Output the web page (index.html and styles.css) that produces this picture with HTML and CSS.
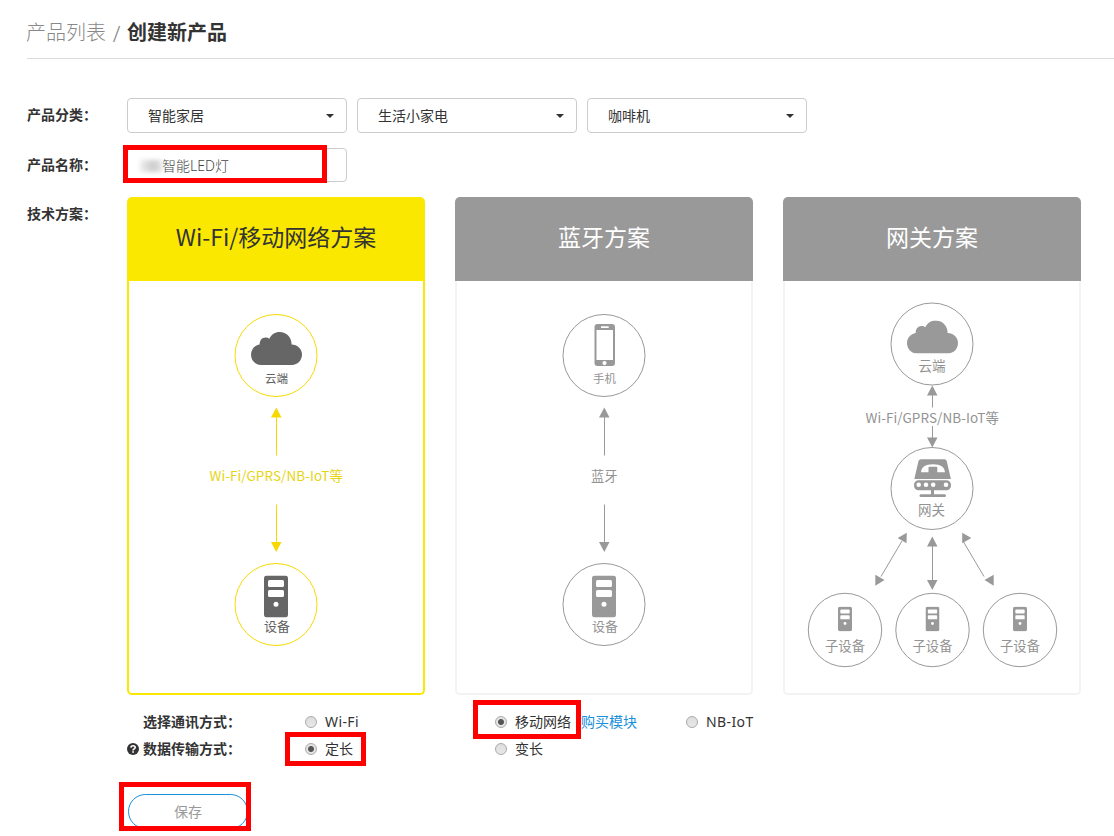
FILE: index.html
```html
<!DOCTYPE html>
<html lang="zh-CN">
<head>
<meta charset="utf-8">
<title>创建新产品</title>
<link rel="stylesheet" href="styles.css">
</head>
<body>
<svg class="symbols" width="0" height="0" aria-hidden="true">
  <symbol id="cloud" viewBox="0 0 51 33">
    <path d="M10 33C4.500 33 0 28.500 0 22.800C0 17.500 3.700 13.300 8.700 12.600C8.500 8.500 11 5.500 14.500 5.500C16 5.500 17.300 6 18.300 6.800C20.300 2.500 24 0 28.700 0C35.500 0 40.800 5.500 40.600 12.600C46.500 12.800 51 17 51 22.600C51 28.500 46.500 33 41 33Z"/>
  </symbol>
  <symbol id="server" viewBox="0 0 24 42">
    <path fill-rule="evenodd" d="M3 0H21Q24 0 24 3V39Q24 42 21 42H3Q0 42 0 39V3Q0 0 3 0ZM5.500 4.500Q4 4.500 4 6V10Q4 11.500 5.500 11.500H18.500Q20 11.500 20 10V6Q20 4.500 18.500 4.500ZM5.500 14.500Q4 14.500 4 16V20Q4 21.500 5.500 21.500H18.500Q20 21.500 20 20V16Q20 14.500 18.500 14.500ZM12 26.300A2.500 2.500 0 1 0 12 31.300A2.500 2.500 0 1 0 12 26.300Z"/>
  </symbol>
</svg>
<main class="page">
  <h1 class="crumbs"><a>产品列表</a><span class="slash">/</span><b>创建新产品</b></h1>

  <div class="row">
    <label class="label">产品分类：</label>
    <div class="selects">
      <div class="select">智能家居<i class="caret"></i></div>
      <div class="select">生活小家电<i class="caret"></i></div>
      <div class="select">咖啡机<i class="caret"></i></div>
    </div>
  </div>

  <div class="row">
    <label class="label">产品名称：</label>
    <div class="input"><i class="smudge"></i>智能LED灯<i class="mark mark-name"></i></div>
  </div>

  <div class="row row-plans">
    <label class="label">技术方案：</label>
    <div class="plans">
      <section class="plan active">
        <h2>Wi-Fi/移动网络方案</h2>
        <svg class="diagram" viewBox="0 0 294 412">
          <g class="line"><circle cx="147" cy="74.500" r="41"/><circle cx="147" cy="323.500" r="41"/><path d="M147.500 134V174.500M147.500 223.500V263"/></g>
          <path class="head" d="M147.300 126.500L152.500 136.500H142ZM147.300 271L152.500 261H142Z"/>
          <g class="icon"><use href="#cloud" x="122" y="51" width="51" height="33"/><use href="#server" x="135" y="294.500" width="24" height="42"/></g>
          <text class="t" x="136" y="101.500" textLength="23" font-size="11.500">云端</text>
          <text class="t link" x="80.500" y="199.500" textLength="133.500" font-size="13.500">Wi-Fi/GPRS/NB-IoT等</text>
          <text class="t" x="135" y="350" textLength="26" font-size="13">设备</text>
        </svg>
      </section>
      <section class="plan">
        <h2>蓝牙方案</h2>
        <svg class="diagram" viewBox="0 0 294 412">
          <g class="line"><circle cx="147" cy="74.500" r="41"/><circle cx="147" cy="323.500" r="41"/><path d="M147.500 134V174.500M147.500 223.500V263"/></g>
          <path class="head" d="M147.300 126.500L152.500 136.500H142ZM147.300 271L152.500 261H142Z"/>
          <g class="icon"><path fill-rule="evenodd" d="M140.500 43H155Q158 43 158 46V82Q158 85 155 85H140.500Q137.500 85 137.500 82V46Q137.500 43 140.500 43ZM139.500 49V79H156V49ZM144 45.300V47H151.700V45.300ZM147.500 80A2.100 2.100 0 1 0 147.500 84.200A2.100 2.100 0 1 0 147.500 80Z"/><use href="#server" x="135" y="294.500" width="24" height="42"/></g>
          <text class="t" x="136" y="101.500" textLength="23" font-size="11.500">手机</text>
          <text class="t" x="134" y="199.500" textLength="26.500" font-size="13.300">蓝牙</text>
          <text class="t" x="135" y="350" textLength="26" font-size="13">设备</text>
        </svg>
      </section>
      <section class="plan">
        <h2>网关方案</h2>
        <svg class="diagram" viewBox="0 0 294 412">
          <g class="line"><circle cx="147" cy="63" r="41"/><circle cx="147" cy="207.500" r="41"/><circle cx="60" cy="349" r="36.700"/><circle cx="147.500" cy="349" r="36.700"/><circle cx="235" cy="349" r="36.700"/><path d="M147.500 112V126.500M147.500 145V158M147.500 263V302M117 260L96 295.500M178 260L199 295.500"/></g>
          <path class="head" d="M147.300 104.500L152.500 114.500H142ZM147.300 166.500L152.500 156.500H142ZM147.300 255.500L152.500 265.500H142ZM147.300 309L152.500 299H142ZM121.800 251.700L112.700 257L121.500 262.300ZM90.300 293.700L99.500 299L90.300 304.700ZM177.200 251.700L186.300 257L177.200 262.300ZM208.700 293.700L199.500 299L208.700 304.700Z"/>
          <g class="icon"><use href="#cloud" x="122" y="39.500" width="51" height="33"/>
            <path fill-rule="evenodd" d="M136 178.300H159.500Q161.300 178.300 161.700 180L165.900 198H129.300L133.500 180Q134 178.300 136 178.300ZM136 191.300H143.500V186.500Q143.500 185.700 144.300 185.700H151.500Q152.300 185.700 152.300 186.500V191.300H160C159.500 186 156 183.200 148 183.200C140 183.200 136.500 186 136 191.300Z"/>
            <path fill-rule="evenodd" d="M133 199.200H162Q166 200 166 204.200Q166 208.400 162 209.200H133Q129 208.400 129 204.200Q129 200 133 199.200ZM133.700 201.500A2.300 2.300 0 1 0 133.700 206.100A2.300 2.300 0 1 0 133.700 201.500ZM141 201.500A2.300 2.300 0 1 0 141 206.100A2.300 2.300 0 1 0 141 201.500ZM148.200 201.500A2.300 2.300 0 1 0 148.200 206.100A2.300 2.300 0 1 0 148.200 201.500ZM161 201.500A2.300 2.300 0 1 0 161 206.100A2.300 2.300 0 1 0 161 201.500Z"/>
            <path d="M146 209H149V213.300H159.500Q161 213.300 161 214.700Q161 216 159.500 216H136Q134.500 216 134.500 214.700Q134.500 213.300 136 213.300H146Z"/>
            <use href="#server" x="53" y="325.500" width="14" height="25"/><use href="#server" x="140.500" y="325.500" width="14" height="25"/><use href="#server" x="228" y="325.500" width="14" height="25"/></g>
          <text class="t" x="133.500" y="90" textLength="27" font-size="13.500">云端</text>
          <text class="t" x="80.500" y="142" textLength="133.500" font-size="13.500">Wi-Fi/GPRS/NB-IoT等</text>
          <text class="t" x="133" y="234" textLength="27" font-size="13.500">网关</text>
          <text class="t" x="40" y="370" textLength="40" font-size="13.300">子设备</text>
          <text class="t" x="127.500" y="370" textLength="40" font-size="13.300">子设备</text>
          <text class="t" x="215" y="370" textLength="40" font-size="13.300">子设备</text>
        </svg>
      </section>
    </div>
  </div>

  <div class="options">
    <b class="option-label">选择通讯方式：</b>
    <span class="choice latin"><i class="radio"></i>Wi-Fi</span>
    <span class="choice"><i class="radio on"></i>移动网络<a class="buy">购买模块</a><i class="mark mark-mobile"></i></span>
    <span class="choice latin"><i class="radio"></i>NB-IoT</span>
    <b class="option-label"><svg class="help" viewBox="0 0 12 12"><circle cx="6" cy="6" r="6"/><path d="M3.900 4.600C4 3.300 4.900 2.700 6 2.700C7.300 2.700 8.200 3.400 8.200 4.500C8.200 5.900 6 5.800 6 7.400" fill="none" stroke="#fff" stroke-width="1.600"/><path d="M5.200 8.200H6.900V9.700H5.200Z" fill="#fff"/></svg>数据传输方式：</b>
    <span class="choice"><i class="radio on"></i>定长<i class="mark mark-fixed"></i></span>
    <span class="choice"><i class="radio"></i>变长</span>
  </div>

  <div class="actions"><button class="save">保存</button><i class="mark mark-save"></i></div>
</main>
</body>
</html>
```

FILE: styles.css
```css
* { box-sizing: border-box; }
body {
  margin: 0;
  min-height: 836px;
  background: #fff;
  color: #333;
  font: 14px/20px "Noto Sans", "Noto Sans CJK SC", sans-serif;
}
.symbols { position: absolute; }
.page { padding-left: 27px; }
.crumbs {
  display: flex;
  align-items: center;
  height: 59px;
  margin: 0 0 39px;
  border-bottom: 1px solid #ddd;
  font-size: 20px;
  line-height: 30px;
  font-weight: 300;
  color: #888;
}
.crumbs a { margin-left: -1px; padding-top: 7px; }
.crumbs b { color: #333; font-weight: 700; padding-top: 7px; }
.slash { width: 21px; text-align: center; padding-top: 7px; font-size: 22px; }
.row { display: flex; margin-bottom: 15px; }
.label { width: 100px; flex: none; font-weight: 700; line-height: 34px; }
.selects { display: flex; gap: 10px; }
.select, .input {
  position: relative;
  width: 220px;
  height: 35px;
  border: 1px solid #ccc;
  border-radius: 4px;
  padding: 0 12px 0 20px;
  display: flex;
  align-items: center;
  justify-content: space-between;
}
.caret { border: 4px solid transparent; border-top-color: #333; border-bottom: 0; }
.input { height: 34px; padding: 1px 12px 0; justify-content: flex-start; color: #444; font-weight: 300; }
.smudge { width: 22px; height: 12px; background: linear-gradient(90deg, #eee, #ccc 60%, #e4e4e4); filter: blur(2px); }
.mark { position: absolute; border: 5px solid #f00; pointer-events: none; }
.mark-name { left: -5px; top: -4px; width: 204px; height: 38px; }
.row-plans { margin: 0; }
.row:nth-of-type(2) { margin-bottom: 15px; height: 34px; }
.plans { display: flex; gap: 30px; }
.plan { width: 298px; height: 498px; display: flex; flex-direction: column; }
.plan h2 {
  margin: 0;
  height: 84px;
  background: #999;
  color: #fff;
  border-radius: 5px 5px 0 0;
  font: 400 23px/79px "Noto Sans CJK SC", sans-serif;
  text-align: center;
}
.diagram {
  width: 298px;
  height: 414px;
  border: 2px solid #f3f3f3;
  border-top: 0;
  border-radius: 0 0 5px 5px;
}
.active h2 { background: #fae800; color: #333; }
.active .diagram { border-color: #fae800; }
.line { fill: none; stroke: #999; stroke-width: 1; }
.head, .icon { fill: #999; }
.active .line { stroke: #f6d900; }
.active .head { fill: #f6d900; }
.active .icon { fill: #666; }
.t { font-family: "Noto Sans CJK SC", sans-serif; fill: #939393; }
.active .t { fill: #606060; }
.active .link { fill: #e6d516; }
.options {
  display: grid;
  grid-template-columns: 178px 190px 191px 190px;
  grid-auto-rows: 27px;
  margin: 13px 0 0 100px;
  line-height: 27px;
}
.option-label { display: flex; align-items: center; padding-left: 16px; white-space: nowrap; }
.help { width: 12px; height: 12px; margin-left: -16px; margin-right: 4px; fill: #333; }
.choice { position: relative; display: flex; align-items: center; }
.latin { letter-spacing: .4px; }
.radio {
  width: 12px;
  height: 12px;
  margin-right: 8px;
  border: 1px solid #aaa;
  border-radius: 50%;
  background: linear-gradient(#ddd, #e8e8e8);
}
.radio.on { background: radial-gradient(circle, #555 0 2.500px, #e4e4e4 3.500px); }
.buy { color: #1890dc; margin-left: 10px; }
.mark-mobile { left: -22px; top: -8px; width: 108px; height: 39px; }
.mark-fixed { left: -20px; top: -3px; width: 81px; height: 34px; }
.actions { position: relative; margin: 32px 0 0 101px; height: 35px; }
.save {
  width: 120px;
  height: 35px;
  padding: 0;
  border: 1px solid #1890dc;
  border-radius: 18px;
  background: #fff;
  color: #999;
  font: inherit;
}
.mark-save { left: -9px; top: -12px; width: 132px; height: 49px; }
```
